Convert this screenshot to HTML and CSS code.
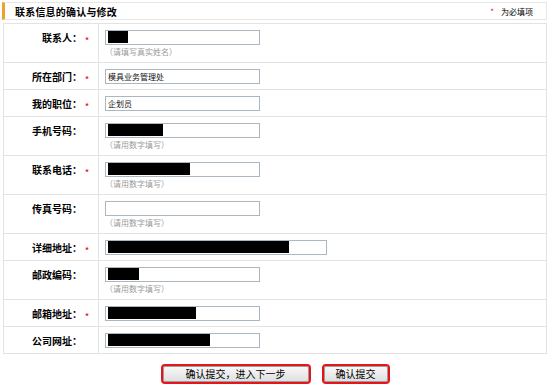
FILE: index.html
```html
<!DOCTYPE html>
<html lang="zh-CN">
<head>
    <meta charset="UTF-8">
    <title>联系信息的确认与修改</title>
    <link rel="stylesheet" href="styles.css">
</head>
<body>

    <!-- Section header -->
    <div class="section-head">
        <span class="section-title">联系信息的确认与修改</span>
        <span class="legend"><span class="req-mark">*</span>为必填项</span>
    </div>

    <!-- Contact form -->
    <table class="form-table">
        <tr>
            <th>联系人：<span class="req"><i>*</i></span></th>
            <td>
                <div class="field"><span class="mask" style="width: 20px"></span></div>
                <div class="hint">（请填写真实姓名）</div>
            </td>
        </tr>
        <tr>
            <th>所在部门：<span class="req"><i>*</i></span></th>
            <td><div class="field">模具业务管理处</div></td>
        </tr>
        <tr>
            <th>我的职位：<span class="req"><i>*</i></span></th>
            <td><div class="field">企划员</div></td>
        </tr>
        <tr>
            <th>手机号码：<span class="req"></span></th>
            <td>
                <div class="field"><span class="mask" style="width: 55px"></span></div>
                <div class="hint">（请用数字填写）</div>
            </td>
        </tr>
        <tr>
            <th>联系电话：<span class="req"><i>*</i></span></th>
            <td>
                <div class="field"><span class="mask" style="width: 82px"></span></div>
                <div class="hint">（请用数字填写）</div>
            </td>
        </tr>
        <tr>
            <th>传真号码：<span class="req"></span></th>
            <td>
                <div class="field"></div>
                <div class="hint">（请用数字填写）</div>
            </td>
        </tr>
        <tr>
            <th>详细地址：<span class="req"><i>*</i></span></th>
            <td><div class="field wide"><span class="mask" style="width: 181px"></span></div></td>
        </tr>
        <tr>
            <th>邮政编码：<span class="req"></span></th>
            <td>
                <div class="field"><span class="mask" style="width: 31px"></span></div>
                <div class="hint">（请用数字填写）</div>
            </td>
        </tr>
        <tr>
            <th>邮箱地址：<span class="req"><i>*</i></span></th>
            <td><div class="field"><span class="mask" style="width: 88px"></span></div></td>
        </tr>
        <tr>
            <th>公司网址：<span class="req"></span></th>
            <td><div class="field"><span class="mask" style="width: 102px"></span></div></td>
        </tr>
    </table>

    <!-- Submit buttons -->
    <div class="actions">
        <button class="btn btn-next">确认提交，进入下一步</button>
        <button class="btn">确认提交</button>
    </div>

</body>
</html>
```

FILE: styles.css
```css
/* General page */
body {
    margin: 0;
    padding: 2px 2px 0 2px;
    background: #fff;
    font-family: "Noto Sans CJK SC", "DejaVu Sans", sans-serif;
    color: #000;
}

/* Section header with orange marker */
.section-head {
    display: flex;
    align-items: center;
    justify-content: space-between;
    height: 16px;
    border: 1px solid #e6e6e6;
    border-left: 3px solid #f0a02c;
    padding: 0 13px 0 10px;
    margin-right: 1px;
}

.section-title {
    font-size: 10px;
    font-weight: bold;
    letter-spacing: 0.2px;
}

.legend {
    font-size: 8px;
    color: #000;
}

.req-mark {
    color: #e0202a;
    margin-right: 7px;
}

/* Form table */
.form-table {
    width: 544px;
    margin: 3px 0 0 1px;
    border-collapse: collapse;
    border: 1px solid #e3e3e3;
}

.form-table tr {
    border-bottom: 1px solid #e3e3e3;
}

.form-table th,
.form-table td {
    vertical-align: top;
    padding: 6px 0 5px 0;
}

.form-table th {
    width: 89px;
    padding-right: 5px;
    border-right: 1px solid #e3e3e3;
    text-align: right;
    font-size: 10px;
    font-weight: bold;
    line-height: 15px;
    white-space: nowrap;
}

.form-table td {
    padding-left: 6px;
}

/* Required asterisk slot */
.req {
    display: inline-block;
    vertical-align: top;
    width: 8px;
    height: 15px;
    text-align: left;
    color: #e0202a;
    font-weight: bold;
    font-size: 8px;
    line-height: 20px;
    padding-left: 3px;
}

.req i {
    font-style: normal;
}

/* Fake input box */
.field {
    width: 151px;
    height: 13px;
    border: 1px solid #aab6c0;
    padding: 0 1px;
    font-size: 8px;
    line-height: 13px;
    color: #111;
    text-indent: 1px;
}

.field.wide {
    width: 218px;
}

/* Redacted value */
.mask {
    display: inline-block;
    vertical-align: top;
    height: 12px;
    background: #000;
}

.hint {
    font-size: 8px;
    line-height: 11px;
    margin-top: 1px;
    color: #9a9a9a;
}

/* Buttons */
.actions {
    display: flex;
    justify-content: center;
    gap: 11px;
    margin-top: 10px;
}

.btn {
    height: 20px;
    padding: 0 12px;
    border: 2px solid #e8141c;
    border-radius: 4px;
    background: linear-gradient(#fafafa, #dedede);
    box-shadow: inset 0 0 0 1px #9c9c9c;
    font-family: inherit;
    font-size: 10px;
    line-height: 14px;
    color: #000;
}

.btn-next {
    width: 150px;
}
```
